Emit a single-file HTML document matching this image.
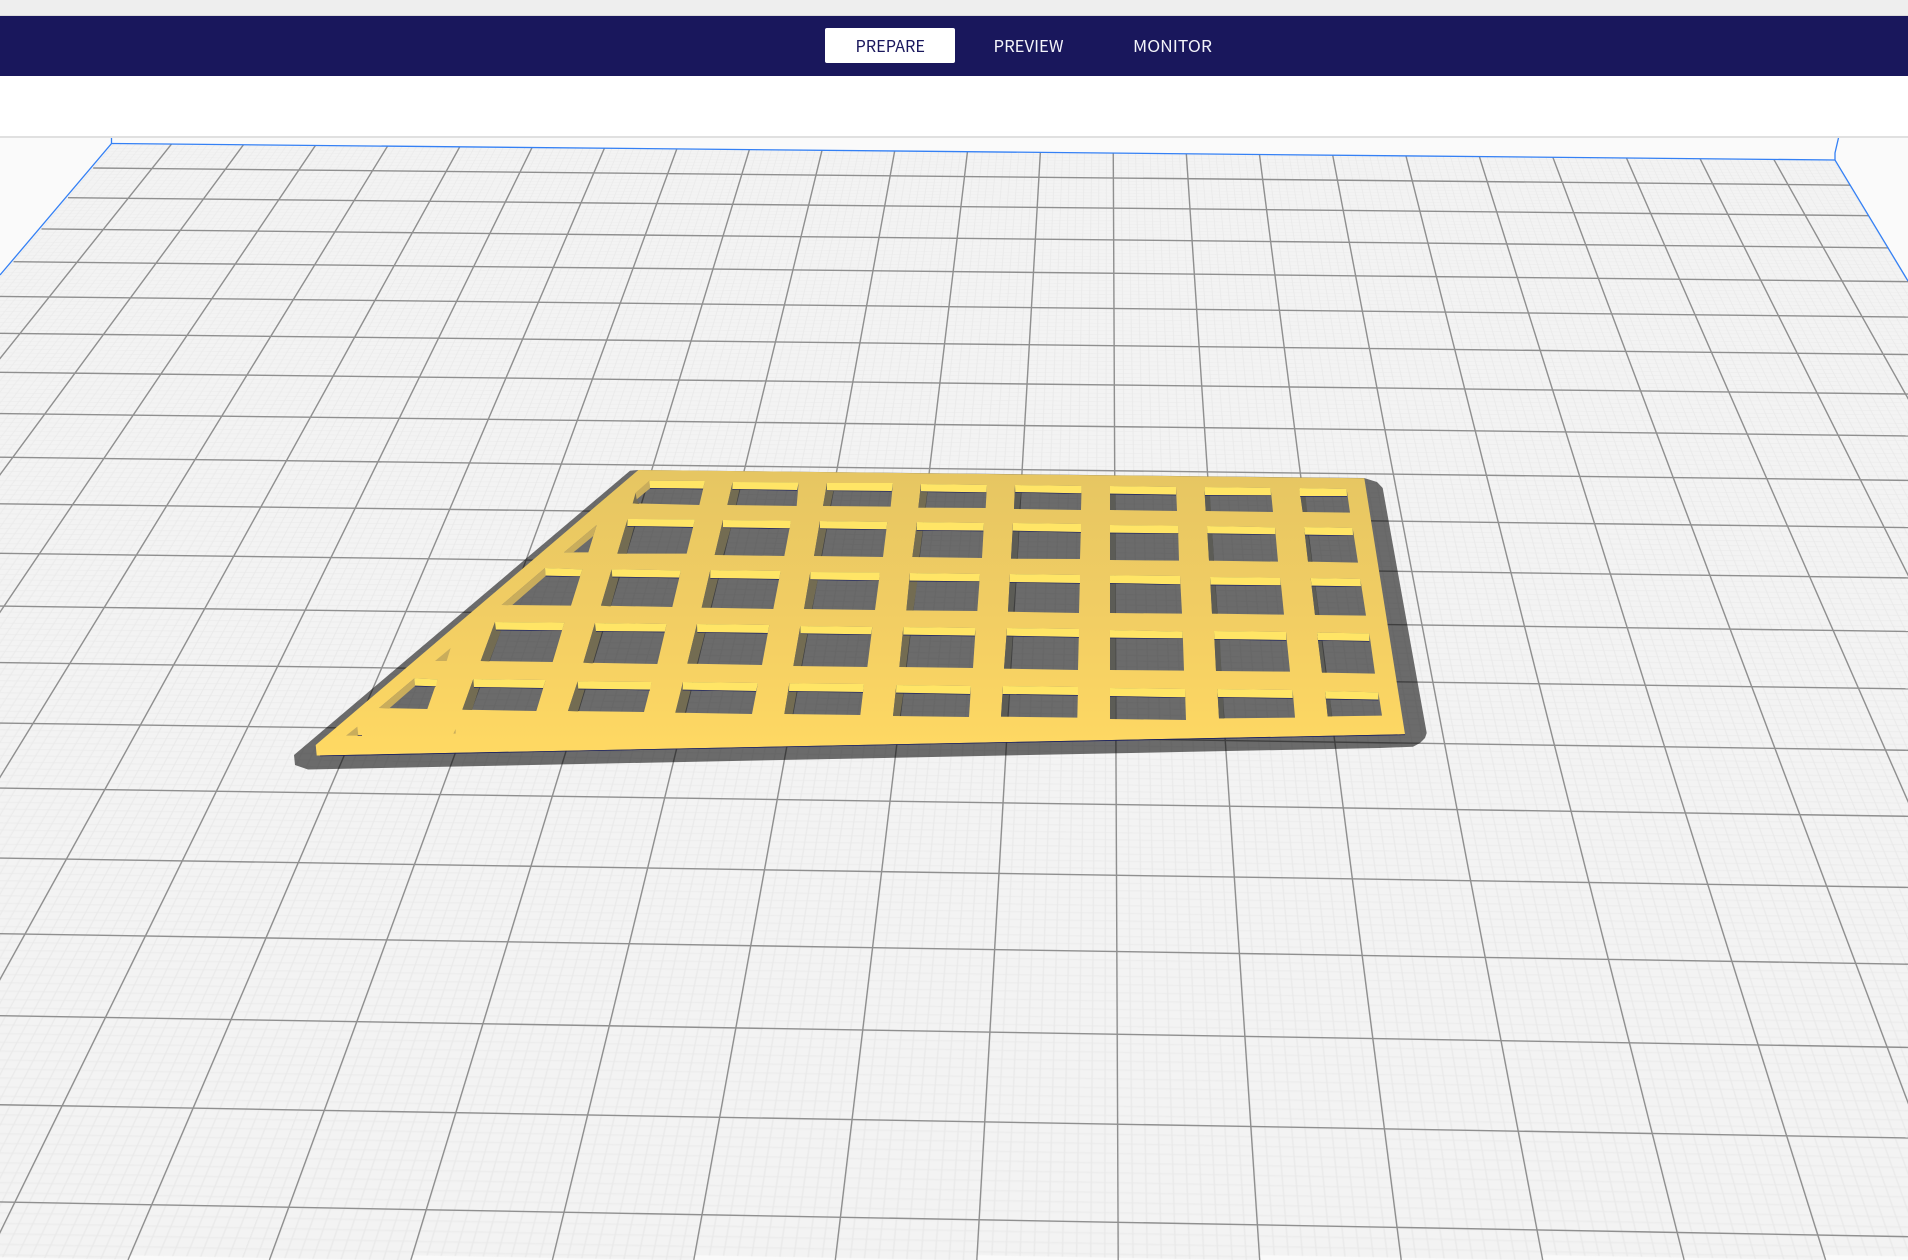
<!DOCTYPE html>
<html><head><meta charset="utf-8"><title>Cura</title>
<style>
html,body{margin:0;padding:0;background:#fafafa;width:1908px;height:1260px;overflow:hidden}
#root{position:relative;width:1908px;height:1260px;overflow:hidden;background:#fafafa}
#topbar{position:absolute;left:0;top:0;width:1908px;height:15px;background:#eee;border-bottom:1px solid #dcdcdc}
#nav{position:absolute;left:0;top:16px;width:1908px;height:60px;background:#19175c}
#btn{position:absolute;left:825px;top:12px;width:130px;height:35px;background:#fff;border-radius:2px}
#sub{position:absolute;left:0;top:76px;width:1908px;height:60px;background:#fff;border-bottom:2px solid #e0e0e0}
#hdr{position:absolute;left:0;top:0;width:1908px;height:76px}
#hdr text{font-family:"Noto Sans CJK JP","Liberation Sans",sans-serif;font-size:16px}
#persp{position:absolute;left:0;top:0;width:0;height:0;transform-origin:0 0;transform:matrix3d(.73297,.0061394,0,-.000005978,-.26865,.24902,0,-.00024247,0,0,1,0,151.88,168.6,0,1)}
.m{position:absolute;top:-86.3px;width:200px;background-color:#f3f3f3;background-image:linear-gradient(90deg,#e9e9e9 1px,transparent 1px),linear-gradient(#e9e9e9 1.5px,transparent 1.5px);background-size:10px 10px;background-position:0 6.3px}
svg{position:absolute;left:0;top:0}
.s{fill:#ffe566}.w{fill:#736c52}.x{fill:#5c5c56}.t{fill:#c9ad5c}
.d{fill:none;stroke:#1a2060;stroke-width:2}
.l{stroke:#8f8f8f;stroke-width:1.4}
</style></head><body>
<div id="root">
<div id="persp">
<div class="m" style="left:-82.8px;width:482.8px;height:2044.6px;background-position:2.8px 6.3px"></div>
<div class="m" style="left:400px;height:2039.7px"></div>
<div class="m" style="left:600px;height:2034.8px"></div>
<div class="m" style="left:800px;height:2029.8px"></div>
<div class="m" style="left:1000px;height:2024.9px"></div>
<div class="m" style="left:1200px;height:2020px"></div>
<div class="m" style="left:1400px;height:2015.1px"></div>
<div class="m" style="left:1600px;height:2010.1px"></div>
<div class="m" style="left:1800px;height:2005.2px"></div>
<div class="m" style="left:2000px;width:282px;height:1998.3px"></div>
</div>
<svg width="1908" height="1260" viewBox="0 0 1908 1260">
<defs>
<clipPath id="bed"><polygon points="112,143.5 1835,160 2507,1260 -838,1260"/></clipPath>
<linearGradient id="pg" gradientUnits="userSpaceOnUse" x1="0" y1="470" x2="0" y2="755"><stop offset="0" stop-color="#e6c662"/><stop offset=".5" stop-color="#f1cd63"/><stop offset="1" stop-color="#ffd963"/></linearGradient>
<mask id="holes" maskUnits="userSpaceOnUse" x="0" y="0" width="1908" height="1260">
<rect x="0" y="0" width="1908" height="1260" fill="#fff"/>
<g fill="#000">
<g transform="translate(280 450) scale(.33333)">
<polygon points="1108,92 1275,93 1258,165 1058,160"/>
<polygon points="950,225 925,307 852,307"/>
<polygon points="1043,207 1245,208 1220,311 1012,311"/>
<polygon points="795,354 907,358 873,467 665,465"/>
<polygon points="995,358 1203,361 1177,471 963,467"/>
<polygon points="645,516 853,518 818,636 602,633"/>
<polygon points="945,519 1160,522 1132,642 910,638"/>
<polygon points="403,685 473,688 442,777 297,774"/>
<polygon points="580,687 797,690 769,783 547,779"/>
<polygon points="893,694 1115,696 1092,786 864,783"/>
</g>
<g transform="translate(640 450) scale(.33333)">
<polygon points="278,96 476,97 470,168 262,165"/>
<polygon points="561,99 759,99 752,170 549,168"/>
<polygon points="843,102 1041,105 1037,174 835,173"/>
<polygon points="249,210 453,212 433,318 224,315"/>
<polygon points="540,213 742,216 729,321 522,318"/>
<polygon points="831,216 1032,219 1026,324 817,321"/>
<polygon points="211,360 422,363 400,477 185,473"/>
<polygon points="511,366 720,367 705,480 492,477"/>
<polygon points="810,369 1020,372 1012,483 799,481"/>
<polygon points="171,522 388,525 366,645 142,641"/>
<polygon points="481,528 697,531 682,651 460,648"/>
<polygon points="790,531 1007,534 999,654 778,651"/>
<polygon points="129,696 354,699 336,792 106,788"/>
<polygon points="448,700 672,702 661,795 433,792"/>
<polygon points="769,705 993,708 987,801 759,798"/>
</g>
<g transform="translate(1000 450) scale(.33333)">
<polygon points="45,105 245,108 243,180 42,177"/>
<polygon points="330,108 528,111 531,183 330,180"/>
<polygon points="613,111 812,114 819,186 617,183"/>
<polygon points="898,114 1040,117 1050,188 908,186"/>
<polygon points="39,219 243,222 240,327 33,326"/>
<polygon points="330,225 534,227 537,332 330,330"/>
<polygon points="621,228 825,232 834,335 627,332"/>
<polygon points="912,231 1058,234 1074,338 924,335"/>
<polygon points="30,372 240,375 237,489 24,485"/>
<polygon points="330,376 540,378 546,491 330,489"/>
<polygon points="630,381 841,383 852,494 636,491"/>
<polygon points="932,384 1081,387 1098,497 945,495"/>
<polygon points="21,534 237,537 234,660 12,656"/>
<polygon points="330,540 548,545 552,662 330,660"/>
<polygon points="642,543 858,546 870,665 648,663"/>
<polygon points="951,548 1108,550 1125,671 966,668"/>
<polygon points="9,708 234,711 232,803 3,800"/>
<polygon points="330,714 555,717 558,810 330,807"/>
<polygon points="652,717 878,720 885,803 657,805"/>
<polygon points="975,723 1135,727 1146,797 983,799"/>
</g>
</g>
</mask>
</defs>
<g clip-path="url(#bed)" class="l">
<line x1="1108" y1="-1027" x2="-720.9" y2="1260"/><line x1="1108" y1="-1027" x2="-579.4" y2="1260"/><line x1="1108" y1="-1027" x2="-438" y2="1260"/><line x1="1108" y1="-1027" x2="-296.5" y2="1260"/><line x1="1108" y1="-1027" x2="-155" y2="1260"/><line x1="1108" y1="-1027" x2="-13.5" y2="1260"/><line x1="1108" y1="-1027" x2="128" y2="1260"/><line x1="1108" y1="-1027" x2="269.4" y2="1260"/><line x1="1108" y1="-1027" x2="410.9" y2="1260"/><line x1="1108" y1="-1027" x2="552.4" y2="1260"/><line x1="1108" y1="-1027" x2="693.8" y2="1260"/><line x1="1108" y1="-1027" x2="835.3" y2="1260"/><line x1="1108" y1="-1027" x2="976.8" y2="1260"/><line x1="1108" y1="-1027" x2="1118.2" y2="1260"/><line x1="1108" y1="-1027" x2="1259.7" y2="1260"/><line x1="1108" y1="-1027" x2="1401.2" y2="1260"/><line x1="1108" y1="-1027" x2="1542.7" y2="1260"/><line x1="1108" y1="-1027" x2="1684.1" y2="1260"/><line x1="1108" y1="-1027" x2="1825.6" y2="1260"/><line x1="1108" y1="-1027" x2="1967.1" y2="1260"/><line x1="1108" y1="-1027" x2="2108.6" y2="1260"/><line x1="1108" y1="-1027" x2="2250" y2="1260"/><line x1="1108" y1="-1027" x2="2391.5" y2="1260"/>
<line x1="93.2" y1="168" x2="1863.4" y2="185.3"/><line x1="68" y1="197.7" x2="1882.4" y2="215.8"/><line x1="41.5" y1="228.9" x2="1902.4" y2="248"/><line x1="13.6" y1="261.7" x2="1923.5" y2="281.8"/><line x1="-15.7" y1="296.3" x2="1945.8" y2="317.5"/><line x1="-46.8" y1="332.8" x2="1969.2" y2="355.2"/><line x1="-79.5" y1="371.4" x2="1994.1" y2="395"/><line x1="-114.2" y1="412.2" x2="2020.4" y2="437.3"/><line x1="-150.9" y1="455.4" x2="2048.3" y2="482.1"/><line x1="-189.9" y1="501.4" x2="2078" y2="529.7"/><line x1="-231.5" y1="550.3" x2="2109.6" y2="580.5"/><line x1="-275.7" y1="602.4" x2="2143.3" y2="634.6"/><line x1="-323" y1="658.1" x2="2179.5" y2="692.6"/><line x1="-373.6" y1="717.7" x2="2218.2" y2="754.7"/><line x1="-428" y1="781.7" x2="2259.8" y2="821.5"/><line x1="-486.4" y1="850.6" x2="2304.7" y2="893.5"/><line x1="-549.6" y1="924.9" x2="2353.2" y2="971.3"/><line x1="-617.9" y1="1005.4" x2="2405.7" y2="1055.7"/><line x1="-692.1" y1="1092.7" x2="2463" y2="1147.6"/><line x1="-772.9" y1="1187.9" x2="2525.5" y2="1247.9"/>
</g>
<g fill="none" stroke="#3480f5" stroke-width="1.3">
<polyline points="111.5,137 111.5,143.5 0,275"/>
<polyline points="111.5,143.5 1835,160 1908,281"/>
<polyline points="1838.7,137 1835,153 1835,160"/>
</g>
<polygon points="630,470.7 638,470 1364,478 1377,482 1382.7,488 1426.7,733 1425,738 1420,743 1413,746.7 1380,748 308,769.5 295,765 294,755" fill="rgba(0,0,0,.56)"/>
<polygon points="638.3,470 1364.3,478.3 1405,734.3 320,755.5 316.7,755.5 315.7,745" fill="url(#pg)" mask="url(#holes)"/>
<line x1="320" y1="755.9" x2="1405" y2="734.7" stroke="#1a2060" stroke-width=".8"/>
<g transform="translate(280 450) scale(.33333)">
<polygon class="t" points="1108,92 1110,115 1070,148 1067,128"/>
<polygon class="w" points="1067,128 1070,148 1078,162 1058,160"/>
<polygon class="t" points="950,225 940,258 880,307 852,307"/>
<polygon class="w" points="1043,207 1062,231 1040,311 1012,311"/>
<polygon class="t" points="795,354 797,378 697,465 665,465"/>
<polygon class="w" points="995,358 1016,383 992,469 963,467"/>
<polygon class="w" points="645,516 664,540 628,634 602,633"/>
<polygon class="w" points="945,519 966,545 938,640 910,638"/>
<polygon class="t" points="403,685 405,708 327,776 297,774"/>
<polygon class="w" points="580,687 598,712 576,780 547,779"/>
<polygon class="w" points="893,694 914,718 894,784 864,783"/>
<polygon class="t" points="512,594 500,633 465,633"/>
<polygon class="t" points="232,830 235,857 198,857"/>
<polygon class="t" points="520,851 527,837 527,851"/>
<polygon class="s" points="1108,92 1275,93 1269,117 1110,115"/>
<polygon class="s" points="1043,207 1245,208 1239,232 1042,229"/>
<polygon class="s" points="795,354 907,358 900,380 797,378"/>
<polygon class="s" points="995,358 1203,361 1197,384 997,381"/>
<polygon class="s" points="645,516 853,518 846,542 648,540"/>
<polygon class="s" points="945,519 1160,522 1154,546 948,544"/>
<polygon class="s" points="403,685 473,688 467,710 405,708"/>
<polygon class="s" points="580,687 797,690 789,715 582,712"/>
<polygon class="s" points="893,694 1115,696 1110,720 895,717"/>
<path class="d" d="M1110 115L1269 117M1042 229L1239 232M797 378L900 380M997 381L1197 384M648 540L846 542M948 544L1154 546M405 708L467 710M582 712L789 715M895 717L1110 720M233 856L246 857"/>
</g>
<g transform="translate(640 450) scale(.33333)">
<polygon class="w" points="278,96 298,120 288,165 262,165"/>
<polygon class="w" points="561,99 580,123 571,168 549,168"/>
<polygon class="w" points="843,102 862,125 856,173 835,173"/>
<polygon class="w" points="249,210 272,235 250,315 224,315"/>
<polygon class="w" points="540,213 559,237 544,318 522,318"/>
<polygon class="w" points="831,216 848,242 838,321 817,321"/>
<polygon class="w" points="211,360 234,386 212,473 185,473"/>
<polygon class="w" points="511,366 533,390 516,477 492,477"/>
<polygon class="w" points="810,369 832,394 820,481 799,481"/>
<polygon class="w" points="171,522 195,548 171,641 142,641"/>
<polygon class="w" points="481,528 502,552 484,648 460,648"/>
<polygon class="w" points="790,531 810,556 798,651 778,651"/>
<polygon class="w" points="129,696 152,721 135,788 106,788"/>
<polygon class="w" points="448,700 470,725 458,792 433,792"/>
<polygon class="w" points="769,705 790,730 780,798 759,798"/>
<polygon class="s" points="278,96 476,97 471,121 277,118"/>
<polygon class="s" points="561,99 759,99 755,124 561,122"/>
<polygon class="s" points="843,102 1041,105 1039,128 843,125"/>
<polygon class="s" points="249,210 453,212 449,236 249,233"/>
<polygon class="s" points="540,213 742,216 739,239 540,236"/>
<polygon class="s" points="831,216 1032,219 1030,243 830,241"/>
<polygon class="s" points="211,360 422,363 417,388 211,385"/>
<polygon class="s" points="511,366 720,367 717,392 511,389"/>
<polygon class="s" points="810,369 1020,372 1018,395 809,393"/>
<polygon class="s" points="171,522 388,525 383,550 172,547"/>
<polygon class="s" points="481,528 697,531 693,554 482,551"/>
<polygon class="s" points="790,531 1007,534 1004,558 790,555"/>
<polygon class="s" points="129,696 354,699 348,724 128,720"/>
<polygon class="s" points="448,700 672,702 669,727 447,724"/>
<polygon class="s" points="769,705 993,708 990,733 768,729"/>
<path class="d" d="M277 118L471 121M561 122L755 124M843 125L1039 128M249 233L449 236M540 236L739 239M830 241L1030 243M211 385L417 388M511 389L717 392M809 393L1018 395M172 547L383 550M482 551L693 554M790 555L1004 558M128 720L348 724M447 724L669 727M768 729L990 733"/>
</g>
<g transform="translate(1000 450) scale(.33333)">
<polygon class="x" points="45,105 63,128 58,177 42,177"/>
<polygon class="x" points="330,108 346,132 346,180 330,180"/>
<polygon class="x" points="613,111 630,136 633,183 617,183"/>
<polygon class="x" points="898,114 917,140 922,186 908,186"/>
<polygon class="x" points="39,219 56,244 52,326 33,326"/>
<polygon class="x" points="330,225 347,249 347,330 330,330"/>
<polygon class="x" points="621,228 637,251 642,332 627,332"/>
<polygon class="x" points="912,231 925,256 936,335 924,335"/>
<polygon class="x" points="30,372 47,398 40,485 24,485"/>
<polygon class="x" points="330,376 347,401 347,489 330,489"/>
<polygon class="x" points="630,381 646,406 652,491 636,491"/>
<polygon class="x" points="932,384 946,409 957,495 945,495"/>
<polygon class="x" points="21,534 38,560 31,656 12,656"/>
<polygon class="x" points="330,540 347,565 347,660 330,660"/>
<polygon class="x" points="642,543 660,569 664,663 648,663"/>
<polygon class="x" points="951,548 965,573 977,668 966,668"/>
<polygon class="x" points="9,708 27,734 22,800 3,800"/>
<polygon class="x" points="330,714 347,740 347,807 330,807"/>
<polygon class="x" points="652,717 669,743 672,805 657,805"/>
<polygon class="x" points="975,723 990,748 996,799 983,799"/>
<polygon class="s" points="45,105 245,108 244,131 46,127"/>
<polygon class="s" points="330,108 528,111 528,135 330,132"/>
<polygon class="s" points="613,111 812,114 813,137 615,136"/>
<polygon class="s" points="898,114 1040,117 1041,139 900,139"/>
<polygon class="s" points="39,219 243,222 243,247 38,243"/>
<polygon class="s" points="330,225 534,227 535,251 330,249"/>
<polygon class="s" points="621,228 825,232 826,254 622,251"/>
<polygon class="s" points="912,231 1058,234 1059,257 915,255"/>
<polygon class="s" points="30,372 240,375 240,400 29,397"/>
<polygon class="s" points="330,376 540,378 541,404 330,400"/>
<polygon class="s" points="630,381 841,383 842,407 632,405"/>
<polygon class="s" points="932,384 1081,387 1083,410 935,408"/>
<polygon class="s" points="21,534 237,537 237,562 20,558"/>
<polygon class="s" points="330,540 548,545 548,566 330,564"/>
<polygon class="s" points="642,543 858,546 859,571 643,568"/>
<polygon class="s" points="951,548 1108,550 1108,574 954,571"/>
<polygon class="s" points="9,708 234,711 234,736 8,733"/>
<polygon class="s" points="330,714 555,717 556,743 330,739"/>
<polygon class="s" points="652,717 878,720 878,745 654,742"/>
<polygon class="s" points="975,723 1135,727 1135,750 978,747"/>
<path class="d" d="M46 127L244 131M330 132L528 135M615 136L813 137M900 139L1041 139M38 243L243 247M330 249L535 251M622 251L826 254M915 255L1059 257M29 397L240 400M330 400L541 404M632 405L842 407M935 408L1083 410M20 558L237 562M330 564L548 566M643 568L859 571M954 571L1108 574M8 733L234 736M330 739L556 743M654 742L878 745M978 747L1135 750"/>
</g>
</svg>
<div id="topbar"></div>
<div id="nav"><div id="btn"></div></div>
<div id="sub"></div>
<svg id="hdr" width="1908" height="76" viewBox="0 0 1908 76">
<text x="855.5" y="52" textLength="69.5" lengthAdjust="spacingAndGlyphs" fill="#19175c">PREPARE</text>
<text x="993.5" y="52" textLength="70" lengthAdjust="spacingAndGlyphs" fill="#f4f4fa">PREVIEW</text>
<text x="1133" y="52" textLength="79" lengthAdjust="spacingAndGlyphs" fill="#f4f4fa">MONITOR</text>
</svg>
</div>
</body></html>
